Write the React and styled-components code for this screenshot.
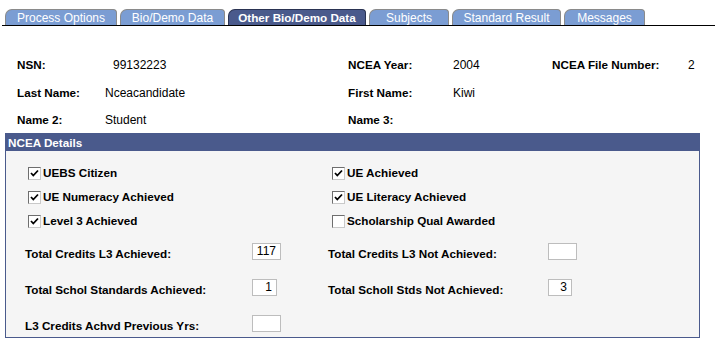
import React from "react";
import styled, { createGlobalStyle } from "styled-components";

const Global = createGlobalStyle`
  html, body { margin: 0; padding: 0; background: #fff; }
  body { font-family: "Liberation Sans", Arial, sans-serif; font-size: 12px; color: #000; }
`;

const Page = styled.div`
  width: 722px;
  height: 348px;
  overflow: hidden;
  padding-top: 9px;
  box-sizing: border-box;
`;

const TabBar = styled.div`
  display: flex;
  align-items: flex-end;
  gap: 3px;
  margin-left: 2px;
  width: 713px;
  padding-left: 3px;
  box-sizing: border-box;
  border-bottom: 1px solid #000;
`;

const Tab = styled.div`
  box-sizing: border-box;
  width: ${(p) => p.$w}px;
  height: 16px;
  padding: 1px 0 0;
  line-height: 14px;
  text-align: center;
  white-space: nowrap;
  color: #fff;
  font-size: ${(p) => (p.$active ? "11.7px" : "12px")};
  font-weight: ${(p) => (p.$active ? 700 : 400)};
  background: ${(p) => (p.$active ? "#4A5A8C" : "#7B9DD3")};
  border: 1px solid ${(p) => (p.$active ? "#2A3352" : "#8A8A8A")};
  border-bottom: none;
  border-radius: 7px 4px 0 0;
`;

const FieldGrid = styled.div`
  display: grid;
  grid-template-columns: 88px 243px 105px 99px 136px auto;
  grid-auto-rows: 14px;
  row-gap: 13.5px;
  margin: 32px 0 0 17px;
  line-height: 14px;
`;

const Label = styled.div`
  font-weight: 700;
  font-size: 11.7px;
  white-space: nowrap;
`;

const Value = styled.div`
  white-space: nowrap;
  padding-left: ${(p) => p.$indent || 0}px;
`;

const Section = styled.div`
  margin: 6px 0 0 5px;
  width: 695px;
  box-sizing: border-box;
  border: 1px solid #4A5A8C;
`;

const SectionHeader = styled.div`
  height: 17px;
  line-height: 17px;
  background: #4A5A8C;
  color: #fff;
  font-weight: 700;
  font-size: 11.7px;
  padding-left: 2px;
`;

const SectionBody = styled.div`
  background: #F5F5F5;
  padding: 15px 0 5px;
`;

const CheckGrid = styled.div`
  display: grid;
  grid-template-columns: 304px auto;
  grid-auto-rows: 14px;
  row-gap: 10px;
  margin-left: 22px;
  line-height: 14px;
`;

const CheckItem = styled.label`
  display: flex;
  align-items: center;
  gap: 2px;
  font-weight: 700;
  font-size: 11.7px;
  white-space: nowrap;
`;

const Box = styled.span`
  box-sizing: border-box;
  width: 13px;
  height: 13px;
  background: #fff;
  border: 1px solid;
  border-color: #6E6E6E #C9C9C9 #C9C9C9 #6E6E6E;
  display: inline-flex;
  align-items: center;
  justify-content: center;
  flex: none;
`;

const NumGrid = styled.div`
  display: grid;
  grid-template-columns: 227px 76px 220px auto;
  grid-auto-rows: 17px;
  row-gap: 19px;
  margin: 15px 0 0 19px;
  align-items: start;
`;

const NumLabel = styled.div`
  font-weight: 700;
  font-size: 11.7px;
  line-height: 14px;
  margin-top: 4px;
  white-space: nowrap;
`;

const NumBox = styled.div`
  box-sizing: border-box;
  width: ${(p) => p.$w}px;
  height: 17px;
  background: #fff;
  border: 1px solid #BDBDBD;
  text-align: right;
  padding-right: 4px;
  line-height: 15px;
  font-size: 12px;
`;

function Check({ checked, children }) {
  return (
    <CheckItem>
      <Box>
        {checked && (
          <svg width="9" height="9" viewBox="0 0 9 9">
            <path d="M1 4 L3.3 6.5 L8 1.5" fill="none" stroke="#000" strokeWidth="1.8" />
          </svg>
        )}
      </Box>
      {children}
    </CheckItem>
  );
}

const tabs = [
  ["Process Options", 112],
  ["Bio/Demo Data", 105],
  ["Other Bio/Demo Data", 138, true],
  ["Subjects", 80],
  ["Standard Result", 109],
  ["Messages", 81],
];

export default function App() {
  return (
    <Page>
      <Global />
      <TabBar>
        {tabs.map(([t, w, a]) => (
          <Tab key={t} $w={w} $active={a}>
            {t}
          </Tab>
        ))}
      </TabBar>

      <FieldGrid>
        <Label>NSN:</Label>
        <Value $indent={8}>99132223</Value>
        <Label>NCEA Year:</Label>
        <Value>2004</Value>
        <Label>NCEA File Number:</Label>
        <Value>2</Value>

        <Label>Last Name:</Label>
        <Value>Nceacandidate</Value>
        <Label>First Name:</Label>
        <Value>Kiwi</Value>
        <div />
        <div />

        <Label>Name 2:</Label>
        <Value>Student</Value>
        <Label>Name 3:</Label>
        <Value />
      </FieldGrid>

      <Section>
        <SectionHeader>NCEA Details</SectionHeader>
        <SectionBody>
          <CheckGrid>
            <Check checked>UEBS Citizen</Check>
            <Check checked>UE Achieved</Check>
            <Check checked>UE Numeracy Achieved</Check>
            <Check checked>UE Literacy Achieved</Check>
            <Check checked>Level 3 Achieved</Check>
            <Check>Scholarship Qual Awarded</Check>
          </CheckGrid>
          <NumGrid>
            <NumLabel>Total Credits L3 Achieved:</NumLabel>
            <NumBox $w={29}>117</NumBox>
            <NumLabel>Total Credits L3 Not Achieved:</NumLabel>
            <NumBox $w={29} />

            <NumLabel>Total Schol Standards Achieved:</NumLabel>
            <NumBox $w={25}>1</NumBox>
            <NumLabel>Total Scholl Stds Not Achieved:</NumLabel>
            <NumBox $w={24}>3</NumBox>

            <NumLabel>L3 Credits Achvd Previous Yrs:</NumLabel>
            <NumBox $w={29} />
          </NumGrid>
        </SectionBody>
      </Section>
    </Page>
  );
}
